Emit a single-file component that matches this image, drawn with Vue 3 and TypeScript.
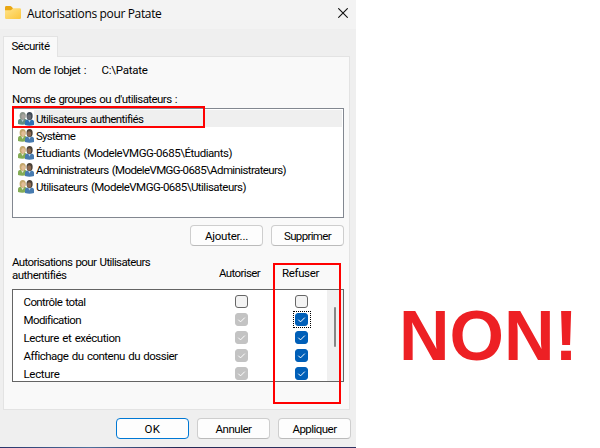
<script setup lang="ts">
interface Principal { name: string; width: number }
interface Permission { name: string; width: number; allow: boolean; deny: boolean; focused?: boolean }

const principals: Principal[] = [
  { name: 'Utilisateurs authentifiés', width: 107 },
  { name: 'Système', width: 39 },
  { name: 'Étudiants (ModeleVMGG-0685\\Étudiants)', width: 196 },
  { name: 'Administrateurs (ModeleVMGG-0685\\Administrateurs)', width: 250 },
  { name: 'Utilisateurs (ModeleVMGG-0685\\Utilisateurs)', width: 210 },
]

const permissions: Permission[] = [
  { name: 'Contrôle total', width: 62, allow: false, deny: false },
  { name: 'Modification', width: 57, allow: true, deny: true, focused: true },
  { name: 'Lecture et exécution', width: 97, allow: true, deny: true },
  { name: 'Affichage du contenu du dossier', width: 153, allow: true, deny: true },
  { name: 'Lecture', width: 36, allow: true, deny: true },
]

// Tracks a label so that it occupies the given width, like the dialog's hinted system font.
const vFit = {
  mounted(el: HTMLElement, binding: { value: number }) {
    const count = (el.textContent ?? '').length
    const natural = el.getBoundingClientRect().width
    el.style.letterSpacing = `${(binding.value - natural) / count}px`
  },
}
</script>

<template>
  <main class="page">
    <section class="dialog">
      <header class="titlebar">
        <svg class="folder" width="16" height="14" viewBox="0 0 16 14">
          <path d="M0 1.4Q0 0 1.4 0H5.2Q6 0 6.6.7L8 2.2V6H0Z" fill="#e9a713" />
          <path d="M0 4.2H5.4Q6.2 4.2 6.8 3.5L7.9 2.3H14.7Q16 2.3 16 3.6V11.7Q16 13 14.7 13H1.3Q0 13 0 11.7Z" fill="url(#folder-face)" />
          <defs>
            <linearGradient id="folder-face" x1="0" y1="0" x2="1" y2="1">
              <stop offset="0" stop-color="#ffe48c" />
              <stop offset="1" stop-color="#fbc63c" />
            </linearGradient>
          </defs>
        </svg>
        <h1><span v-fit="134.5">Autorisations pour Patate</span></h1>
        <svg class="close" width="10" height="10" viewBox="0 0 10 10">
          <path d="M.3.3 9.7 9.7M9.7.3.3 9.7" stroke="#111" stroke-width="1.1" />
        </svg>
      </header>

      <div class="tab"><span v-fit="38">Sécurité</span></div>

      <div class="panel">
        <div class="object">
          <span v-fit="74">Nom de l'objet :</span>
          <span v-fit="46">C:\Patate</span>
        </div>
        <div class="caption"><span v-fit="165">Noms de groupes ou d'utilisateurs :</span></div>

        <ul class="principals">
          <li v-for="(p, i) in principals" :key="p.name" :class="{ selected: i === 0 }">
            <svg class="users" width="16" height="15" viewBox="0 0 16 15">
              <path d="M0 13V10.5Q0 8 3 7.8H6Q9 8 9 10.5V13Q4 14.5 0 13Z" :fill="i === 0 ? '#5f8d83' : '#84ac55'" />
              <path d="M3 8 4.6 11 6.3 8Z" :fill="i === 0 ? '#b9cdd0' : '#e3ead8'" />
              <ellipse cx="4.7" cy="4.8" rx="3.1" ry="3.9" :fill="i === 0 ? '#8c958a' : '#c4a86c'" />
              <ellipse cx="5.2" cy="5.6" rx="1.9" ry="2.6" :fill="i === 0 ? '#a9a49f' : '#e2bd97'" />
              <path d="M7 14V11Q7 8.8 10 8.5H13Q16 8.8 16 11V14Q11.5 15.5 7 14Z" :fill="i === 0 ? '#2f70b4' : '#477bb0'" />
              <path d="M10 8.5 11.5 11.5 13 8.5Z" fill="#b4cde3" />
              <ellipse cx="11.6" cy="5" rx="3.1" ry="3.9" :fill="i === 0 ? '#3f4a56' : '#4b4238'" />
              <ellipse cx="11.1" cy="6" rx="2" ry="2.8" :fill="i === 0 ? '#66696f' : '#8d6a50'" />
            </svg>
            <span v-fit="p.width">{{ p.name }}</span>
          </li>
        </ul>

        <div class="actions">
          <button><span v-fit="43">Ajouter...</span></button>
          <button><span v-fit="47">Supprimer</span></button>
        </div>

        <div class="heading">
          <div class="subject">
            <span v-fit="138">Autorisations pour Utilisateurs</span>
            <span v-fit="54">authentifiés</span>
          </div>
          <div class="allow-title"><span v-fit="41">Autoriser</span></div>
          <div class="deny-title"><span v-fit="37">Refuser</span></div>
        </div>

        <div class="permissions">
          <ul>
            <li v-for="p in permissions" :key="p.name">
              <div class="label"><span v-fit="p.width">{{ p.name }}</span></div>
              <i class="box" :class="{ disabled: p.allow }">
                <svg v-if="p.allow" width="13" height="13" viewBox="0 0 13 13"><path d="M3.3 6.7 5.5 8.9 9.8 4.6" /></svg>
              </i>
              <i class="box deny" :class="{ checked: p.deny, focused: p.focused }">
                <svg v-if="p.deny" width="13" height="13" viewBox="0 0 13 13"><path d="M3.3 6.7 5.5 8.9 9.8 4.6" /></svg>
              </i>
            </li>
          </ul>
          <div class="scrollbar"><div class="thumb"></div></div>
        </div>
      </div>

      <footer>
        <button class="primary"><span v-fit="16">OK</span></button>
        <button><span v-fit="36">Annuler</span></button>
        <button><span v-fit="44">Appliquer</span></button>
      </footer>
      <div class="desktop"></div>
      <div class="mark mark-user"></div>
      <div class="mark mark-deny"></div>
    </section>
    <aside>NON!</aside>
  </main>
</template>

<style>
body { margin: 0; background: #fff; overflow: hidden; }
</style>

<style scoped>
* { box-sizing: border-box; }
.page { display: flex; width: 600px; height: 448px; font: 11.5px/13px Roboto, "Liberation Sans", sans-serif; word-spacing: 1px; color: #000; }
span { white-space: nowrap; }
ul { margin: 0; padding: 0; list-style: none; }
.dialog { position: relative; display: flex; flex-direction: column; width: 356px; height: 448px; flex: none; background: #efefef; }
.titlebar { display: flex; align-items: flex-start; height: 29px; flex: none; padding-left: 5px; background: #f3f3f3; }
.folder { margin-top: 6px; flex: none; }
h1 { margin: 6px 0 0 6px; font: 12px/16px "Open Sans", "Noto Sans", sans-serif; word-spacing: 0; }
.close { margin: 8px 8px 0 auto; }
.tab { z-index: 1; width: 55px; height: 21px; flex: none; margin: 7px 0 -1px 3px; padding: 3px 0 0 7.5px; background: #f9f9f9; border: 1px solid #e3e3e3; border-bottom: 0; }
.panel { display: flex; flex-direction: column; width: 347px; height: 354px; flex: none; margin-left: 3px; padding: 7px 5px 0 8px; background: #f9f9f9; border: 1px solid #e3e3e3; }
.object { display: flex; gap: 15.5px; height: 13px; }
.caption { height: 13px; margin-top: 16px; }
.principals { width: 332px; height: 110px; margin-top: 2px; padding: 1px; background: #fff; border: 1px solid #828790; }
.principals li { display: flex; align-items: center; gap: 2px; height: 17px; padding: 2px 0 0 4px; }
.principals li.selected { background: linear-gradient(90deg, #fff 20px, #efefef 20px); }
.users { flex: none; margin-top: -2px; }
.actions { display: flex; gap: 8px; justify-content: flex-end; width: 332px; margin-top: 7px; }
button { display: flex; align-items: center; justify-content: center; width: 73px; height: 21px; flex: none; padding: 1px 0 0; background: #fdfdfd; border: 1px solid #cecece; border-bottom-color: #bbb; border-radius: 4px; font: inherit; word-spacing: inherit; color: #000; }
.heading { display: grid; grid-template-columns: 207px 63px auto; width: 332px; height: 33px; margin-top: 10px; }
.subject { display: flex; flex-direction: column; align-items: flex-start; }
.allow-title, .deny-title { padding-top: 11px; }
.permissions { display: flex; width: 332px; height: 93px; overflow: hidden; background: #fff; border: 1px solid #646464; }
.permissions ul { width: 314px; padding-top: 3px; }
.permissions li { display: grid; grid-template-columns: 222px 60px 13px; height: 18px; align-items: center; }
.label { padding-left: 10.5px; }
.box { position: relative; display: block; width: 13px; height: 13px; margin-top: -1px; border: 1px solid #666; border-radius: 3px; background: #f3f3f3; }
.box svg { display: block; margin: -1px; fill: none; stroke: #fff; stroke-width: 1; }
.box.disabled { border-color: #c3c3c3; background: #c3c3c3; }
.box.checked { border-color: #005fb8; background: #005fb8; }
.focused::after { content: ""; position: absolute; inset: -3px -4px -3px -3px; border: 1px dotted #000; }
.scrollbar { width: 16px; padding: 17px 0 0 7px; background: #f0f0f0; }
.thumb { width: 2px; height: 40px; background: #868686; border-radius: 1px; }
footer { display: flex; gap: 8px; margin: 8px 0 0 116px; }
.primary { border-color: #0078d4; }
.desktop { height: 1px; width: 356px; margin-top: auto; background: linear-gradient(90deg, #29356b, #4f709c 25%, #252954 50%, #303563); }
.mark { position: absolute; z-index: 2; border: 2px solid #f00; }
.mark-user { left: 12px; top: 106px; width: 193px; height: 22px; }
.mark-deny { left: 273px; top: 263px; width: 68px; height: 141px; }
aside { padding: 296px 0 0 43px; font: bold 70px/80px "Liberation Sans", Arial, sans-serif; word-spacing: 0; color: #ed2024; }
</style>
